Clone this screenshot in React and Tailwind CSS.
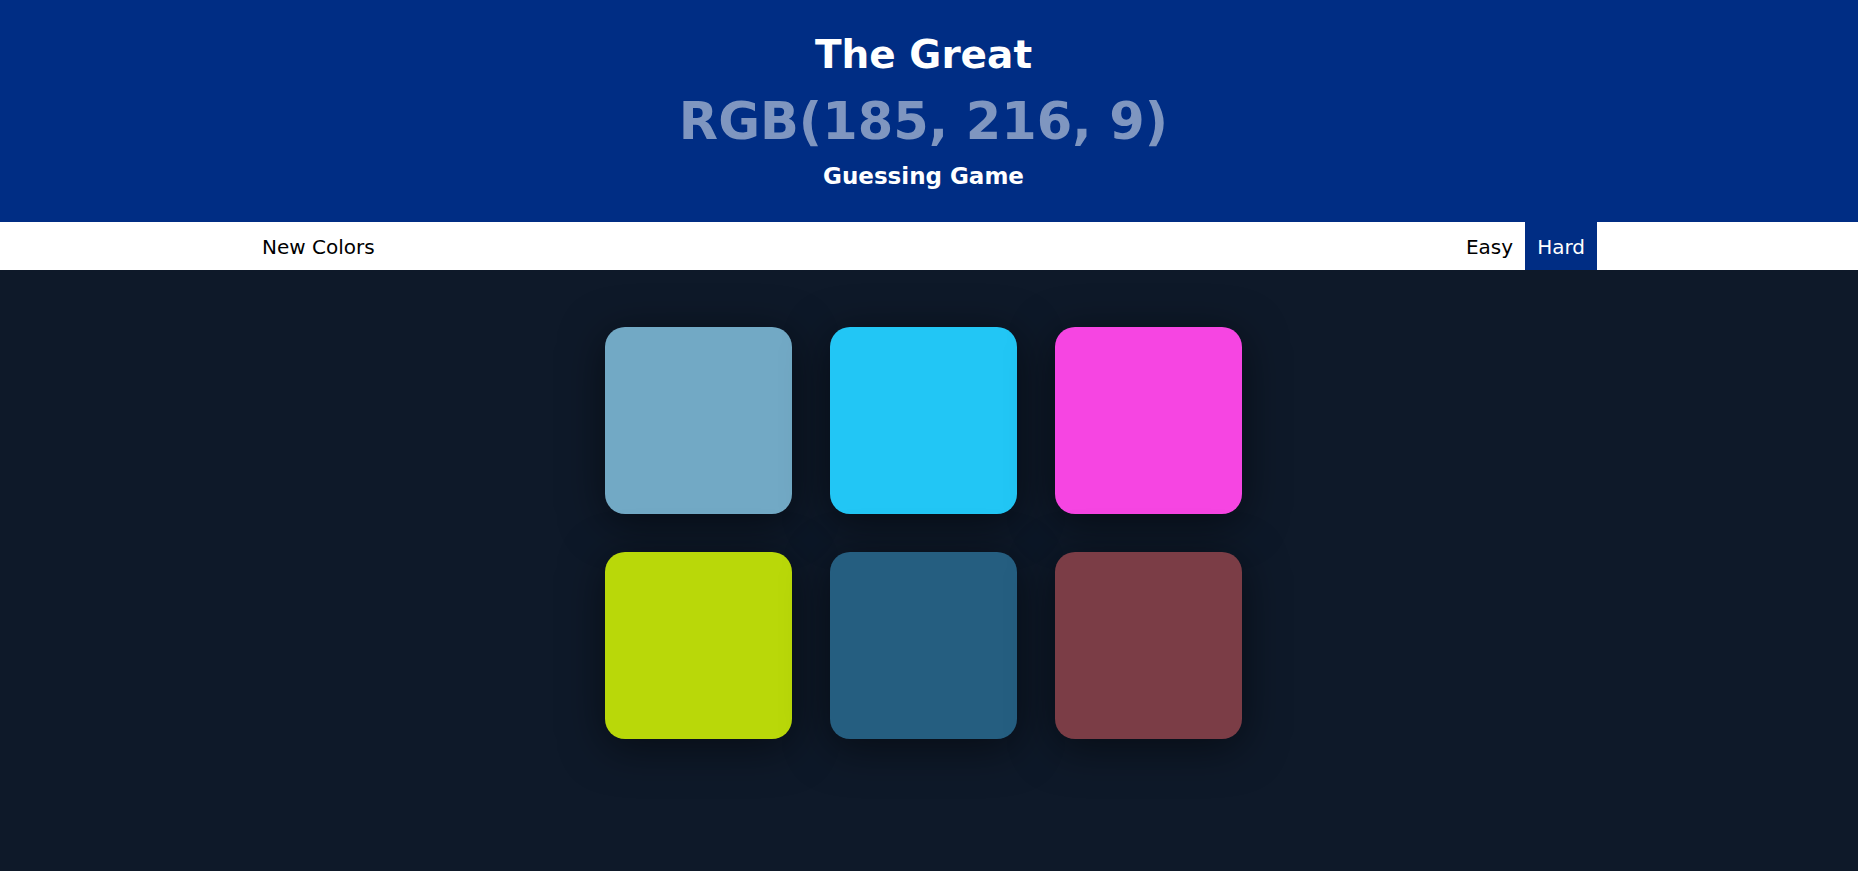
import React, { useState } from "react";

const colors = [
  "#72a9c5",
  "#22c6f5",
  "#f645e2",
  "#b9d809",
  "#255e80",
  "#7b3d46",
];

const App = () => {
  const [mode, setMode] = useState("hard");

  return (
    <div className="min-h-screen bg-[#0e1929] font-['DejaVu_Sans',sans-serif]">
      {/* Header */}
      <header className="bg-[#002d84] pr-[11px] pt-[32px] pb-[32px] text-center">
        <h1 className="text-[39px] leading-[46px] font-bold text-white">
          The Great
        </h1>
        <div className="mt-[14px] text-[51px] leading-[59px] font-bold text-[#7f96c0]">
          RGB(185, 216, 9)
        </div>
        <div className="mt-[12px] text-[23px] leading-[27px] font-bold text-white">
          Guessing Game
        </div>
      </header>

      {/* Controls */}
      <nav className="bg-white pr-[11px]">
        <div className="w-[1347px] mx-auto flex justify-between h-[48px]">
          <button className="px-3 pt-[1px] text-[20px] leading-[48px] text-black">
            New Colors
          </button>
          <div className="flex">
            <button
              onClick={() => setMode("easy")}
              className={`px-3 pt-[1px] text-[20px] leading-[48px] ${
                mode === "easy" ? "bg-[#002d84] text-white" : "text-black"
              }`}
            >
              Easy
            </button>
            <button
              onClick={() => setMode("hard")}
              className={`px-3 pt-[1px] text-[20px] leading-[48px] ${
                mode === "hard" ? "bg-[#002d84] text-white" : "text-black"
              }`}
            >
              Hard
            </button>
          </div>
        </div>
      </nav>

      {/* Squares */}
      <main className="pr-[11px] pt-[57px] pb-[60px] flex justify-center">
        <div className="grid grid-cols-[187px_187px_187px] gap-x-[38px] gap-y-[38px]">
          {colors.map((c, i) => (
            <div
              key={i}
              className="w-[187px] h-[187px] rounded-[20px] shadow-[0_8px_44px_rgba(0,0,0,0.5)]"
              style={{ backgroundColor: c }}
            />
          ))}
        </div>
      </main>
    </div>
  );
};

export default App;
